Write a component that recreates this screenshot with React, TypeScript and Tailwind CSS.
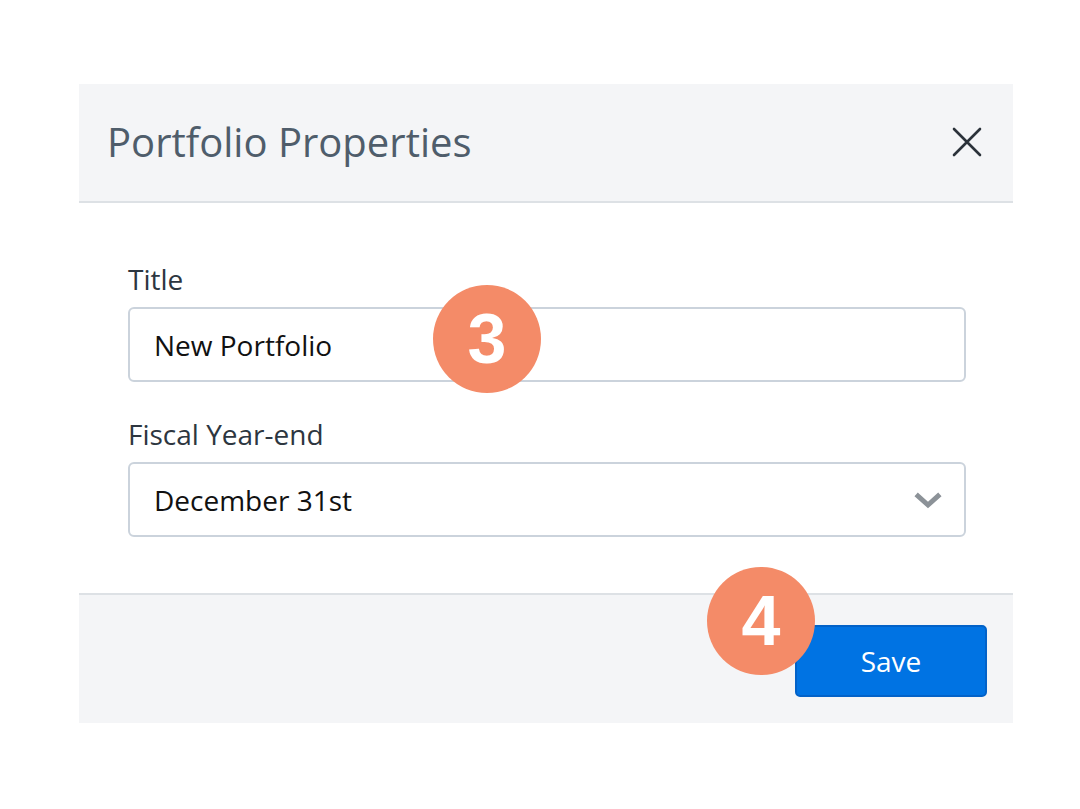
import React from "react";

const font = { fontFamily: '"Open Sans", "Noto Sans", sans-serif' };

const Badge = ({ n, className }: { n: string; className: string }) => (
  <div
    className={`absolute flex h-[108px] w-[108px] items-center justify-center rounded-full bg-[#f48b68] text-[70px] font-bold leading-none text-white ${className}`}
    style={{ fontFamily: '"Liberation Sans", Arial, sans-serif' }}
  >
    {n}
  </div>
);

const App = () => {
  return (
    <div className="min-h-[809px] w-[1080px] bg-white pt-[84px]" style={font}>
      <div className="relative ml-[79px] w-[934px]">
        {/* Header */}
        <div className="flex h-[119px] items-center justify-between border-b-2 border-[#dde1e5] bg-[#f4f5f7] pl-[28px] pr-[31px] pb-[2px]">
          <h2 className="text-[40px] font-normal text-[#4f5d6b]">Portfolio Properties</h2>
          <svg width="30" height="30" viewBox="0 0 30 30" className="text-[#2b323a]">
            <path d="M2 2 L28 28 M28 2 L2 28" stroke="currentColor" strokeWidth="2.6" strokeLinecap="round" />
          </svg>
        </div>

        {/* Body */}
        <div className="pl-[49px] pr-[47px] pt-[62px] pb-[56px]">
          <label className="block text-[28px] leading-[28px] text-[#2d3640]">Title</label>
          <div className="mt-[14px] flex h-[75px] items-center rounded-[6px] border-2 border-[#cbd3dc] px-[24px] text-[28px] text-[#111]">
            New Portfolio
          </div>

          <label className="mt-[38px] block text-[28px] leading-[28px] text-[#2d3640]">Fiscal Year-end</label>
          <div className="mt-[14px] flex h-[75px] items-center justify-between rounded-[6px] border-2 border-[#cbd3dc] pl-[24px] pr-[22px] text-[28px] text-[#111]">
            <span>December 31st</span>
            <svg width="28" height="18" viewBox="0 0 28 18" className="mt-[2px]">
              <path d="M4 4 L14 13 L24 4" fill="none" stroke="#8c9298" strokeWidth="5" strokeLinecap="square" />
            </svg>
          </div>
        </div>

        {/* Footer */}
        <div className="flex h-[130px] items-start justify-end border-t-2 border-[#dde1e5] bg-[#f4f5f7] pr-[26px] pt-[30px]">
          <button className="h-[72px] w-[192px] rounded-[5px] border-2 border-[#0262c8] bg-[#0073e3] text-[28px] text-white">
            Save
          </button>
        </div>

        <Badge n="3" className="left-[354px] top-[201px]" />
        <Badge n="4" className="left-[628px] top-[483px]" />
      </div>
    </div>
  );
};

export default App;
